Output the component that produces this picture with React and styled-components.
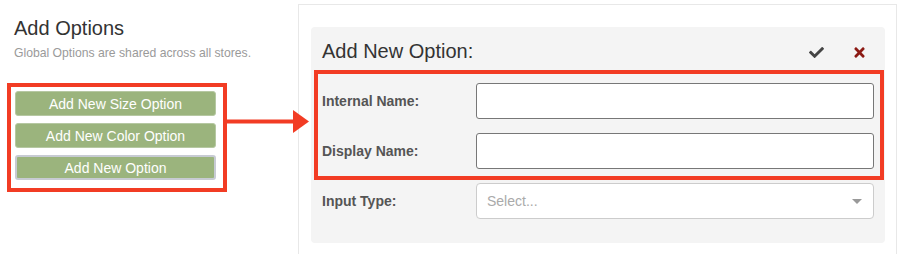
import React from "react";
import styled, { createGlobalStyle } from "styled-components";
import { FaCheck, FaTimes } from "react-icons/fa";

const GlobalStyle = createGlobalStyle`
  html, body {
    margin: 0;
    padding: 0;
    background: #ffffff;
    overflow: hidden;
  }
  body {
    font-family: "Liberation Sans", Arial, Helvetica, sans-serif;
  }
`;

const Page = styled.div`
  display: flex;
  align-items: flex-start;
  width: 902px;
  height: 254px;
`;

const LeftColumn = styled.div`
  width: 298px;
  flex-shrink: 0;
  padding: 17px 0 0 7px;
  box-sizing: border-box;
`;

const Title = styled.h2`
  margin: 0 0 0 7px;
  font-size: 20px;
  line-height: 22px;
  font-weight: normal;
  color: #333333;
`;

const Subtitle = styled.p`
  margin: 7px 0 0 7px;
  font-size: 12.2px;
  line-height: 14px;
  color: #9a9a9a;
`;

const AnnotatedRow = styled.div`
  display: flex;
  align-items: flex-start;
  margin-top: 23px;
`;

const Highlight = styled.div`
  border: 4px solid #f23c24;
  box-sizing: border-box;
  padding: ${(p) => p.$pad};
  margin: ${(p) => p.$margin || 0};
  display: flex;
  flex-direction: column;
  gap: ${(p) => p.$gap}px;
`;

const GreenButton = styled.button`
  width: 201px;
  height: 25px;
  box-sizing: border-box;
  background: #9bb47d;
  border: ${(p) => (p.$active ? "2px solid #c7cbd3" : "1px solid #b6c8a2")};
  border-radius: 3px;
  color: #ffffff;
  font-family: inherit;
  font-size: 14px;
  padding: 0;
  cursor: pointer;
`;

const Arrow = styled.svg`
  position: relative;
  z-index: 1;
  flex-shrink: 0;
  margin-top: 27px;
`;

const RightColumn = styled.div`
  margin-top: 4px;
  width: 599px;
  height: 260px;
  box-sizing: border-box;
  border: 1px solid #e8e8e8;
  border-bottom: none;
  background: #ffffff;
  padding: 22px 11px 0 12px;
`;

const Panel = styled.div`
  background: #f4f4f4;
  border-radius: 4px;
  padding: 13px 11px 24px 11px;
`;

const PanelHeader = styled.div`
  display: flex;
  align-items: center;
  height: 22px;
  margin-bottom: 8px;
`;

const PanelTitle = styled.h3`
  flex: 1;
  margin: 0;
  font-size: 20px;
  line-height: 22px;
  font-weight: normal;
  color: #333333;
`;

const HeaderActions = styled.div`
  display: flex;
  align-items: center;
  gap: 28px;
  margin-right: 7px;
  margin-top: 3px;
`;

const IconButton = styled.span`
  display: inline-flex;
  color: ${(p) => p.$color};
  cursor: pointer;
`;

const FieldRow = styled.div`
  display: flex;
  align-items: center;
  margin-top: ${(p) => p.$top || 0}px;
`;

const Label = styled.label`
  width: 154px;
  flex-shrink: 0;
  font-size: 14px;
  font-weight: bold;
  color: #555555;
`;

const TextInput = styled.input`
  width: 398px;
  height: 36px;
  box-sizing: border-box;
  border: 1px solid #777777;
  border-radius: 3px;
  background: #ffffff;
  padding: 0 10px;
  font-family: inherit;
  font-size: 14px;
  outline: none;
`;

const SelectBox = styled.div`
  width: 398px;
  height: 36px;
  box-sizing: border-box;
  border: 1px solid #cccccc;
  border-radius: 4px;
  background: #ffffff;
  display: flex;
  align-items: center;
  padding: 0 10px;
  font-size: 14px;
  color: #aaaaaa;
`;

const Placeholder = styled.span`
  flex: 1;
`;

const Caret = styled.span`
  width: 0;
  height: 0;
  border-left: 5px solid transparent;
  border-right: 5px solid transparent;
  border-top: 5px solid #999999;
  margin-right: 1px;
`;

export default function App() {
  return (
    <>
      <GlobalStyle />
      <Page>
        <LeftColumn>
          <Title>Add Options</Title>
          <Subtitle>Global Options are shared across all stores.</Subtitle>
          <AnnotatedRow>
            <Highlight $pad="4px 7px 8px 4px" $gap={7}>
              <GreenButton>Add New Size Option</GreenButton>
              <GreenButton>Add New Color Option</GreenButton>
              <GreenButton $active>Add New Option</GreenButton>
            </Highlight>
            <Arrow width="86" height="24" viewBox="0 0 86 24">
              <rect x="0" y="9.5" width="68" height="4" fill="#f23c24" />
              <polygon points="66,0 82,11.5 66,23" fill="#f23c24" />
            </Arrow>
          </AnnotatedRow>
        </LeftColumn>

        <RightColumn>
          <Panel>
            <PanelHeader>
              <PanelTitle>Add New Option:</PanelTitle>
              <HeaderActions>
                <IconButton $color="#444444">
                  <FaCheck size={15} />
                </IconButton>
                <IconButton $color="#8c1a14">
                  <FaTimes size={15} />
                </IconButton>
              </HeaderActions>
            </PanelHeader>

            <Highlight $pad="9px 6px 7px 4px" $margin="0 -10px 0 -8px" $gap={14}>
              <FieldRow>
                <Label>Internal Name:</Label>
                <TextInput />
              </FieldRow>
              <FieldRow>
                <Label>Display Name:</Label>
                <TextInput />
              </FieldRow>
            </Highlight>

            <FieldRow $top={3}>
              <Label>Input Type:</Label>
              <SelectBox>
                <Placeholder>Select...</Placeholder>
                <Caret />
              </SelectBox>
            </FieldRow>
          </Panel>
        </RightColumn>
      </Page>
    </>
  );
}
